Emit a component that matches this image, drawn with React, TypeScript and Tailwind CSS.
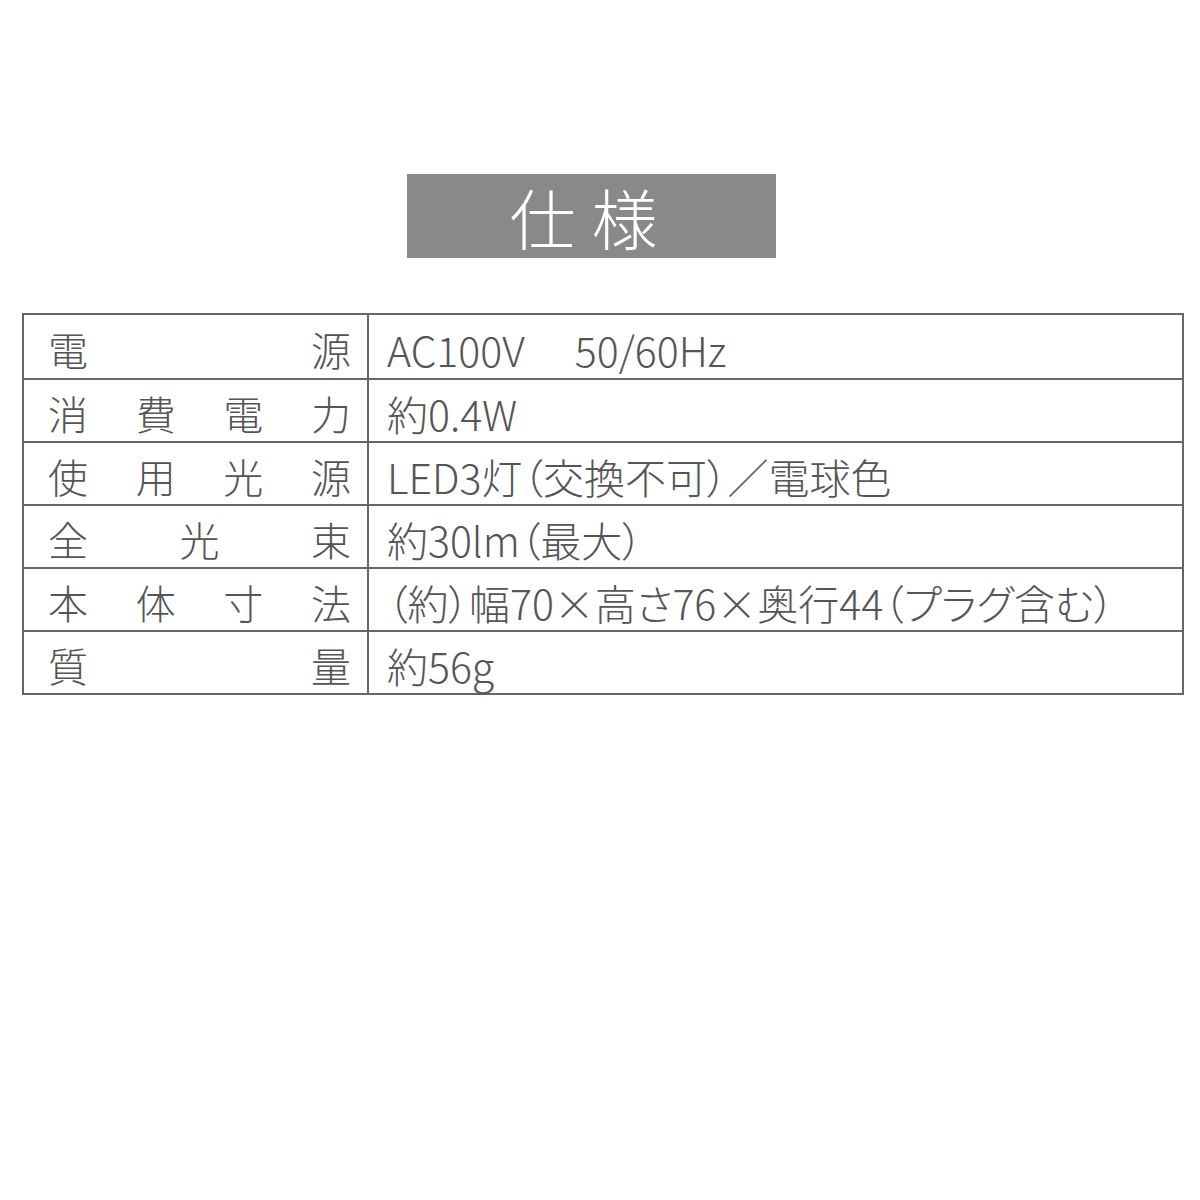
import React from 'react'

// 仕様テーブルの行データ
const rows: { label: string[]; value: string }[] = [
  { label: ['電', '源'], value: 'AC100V\u3000 50/60Hz' },
  { label: ['消', '費', '電', '力'], value: '約0.4W' },
  { label: ['使', '用', '光', '源'], value: 'LED3灯（交換不可）／電球色' },
  { label: ['全', '光', '束'], value: '約30lm（最大）' },
  { label: ['本', '体', '寸', '法'], value: '（約）幅70×高さ76×奥行44（プラグ含む）' },
  { label: ['質', '量'], value: '約56g' },
]

const font = { fontFamily: '"Noto Sans CJK JP", "Noto Sans", sans-serif' }

export default function App() {
  return (
    <div className="w-[1200px] h-[1200px] bg-white" style={font}>
      <div className="pt-[174px] pl-[407px]">
        <div className="w-[369px] h-[84px] bg-[#898989] flex items-center justify-center">
          <span className="text-white text-[66px] font-light leading-none tracking-[16px]">仕様</span>
        </div>
      </div>

      <div className="mt-[55px] ml-[22px] w-[1162px] border-2 border-[#666]">
        {rows.map((row, i) => (
          <div
            key={i}
            className={`flex h-[63px] ${i > 0 ? 'border-t-2 border-[#666]' : ''}`}
          >
            <div className="w-[345px] shrink-0 border-r-2 border-[#666] flex items-center justify-between pl-[24px] pr-[16px] text-[40px] font-light text-[#555] leading-none pt-[5px]">
              {row.label.map((c, j) => (
                <span key={j}>{c}</span>
              ))}
            </div>
            <div className="flex-1 flex items-center pl-[18px] text-[41px] font-light text-[#555] leading-none pt-[5px] whitespace-pre [font-feature-settings:'palt']">
              {row.value}
            </div>
          </div>
        ))}
      </div>
    </div>
  )
}
